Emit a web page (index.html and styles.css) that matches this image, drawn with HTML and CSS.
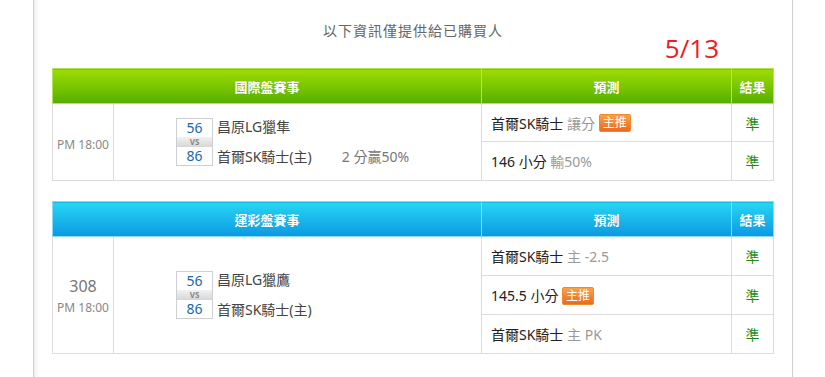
FILE: index.html
```html
<!DOCTYPE html>
<html lang="zh-Hant">
<head>
<meta charset="utf-8">
<title>賽事預測</title>
<link rel="stylesheet" href="styles.css">
</head>
<body>
<div class="page">
  <div class="notice">以下資訊僅提供給已購買人</div>
  <div class="date">5/13</div>

  <table class="board green">
    <colgroup><col class="c1"><col class="c2"><col class="c3"><col class="c4"></colgroup>
    <thead>
      <tr><th colspan="2">國際盤賽事</th><th>預測</th><th>結果</th></tr>
    </thead>
    <tbody>
      <tr class="short">
        <td rowspan="2" class="time"><div class="clock solo">PM 18:00</div></td>
        <td rowspan="2" class="match">
          <div class="matchup">
            <div class="score">
              <div class="num">56</div>
              <div class="vs">VS</div>
              <div class="num">86</div>
            </div>
            <div class="teams">
              <div class="team">昌原LG獵隼</div>
              <div class="team">首爾SK騎士(主)<span class="extra">2 分贏50%</span></div>
            </div>
          </div>
        </td>
        <td class="pick">首爾SK騎士 <span class="muted">讓分</span> <span class="badge">主推</span></td>
        <td class="result">準</td>
      </tr>
      <tr>
        <td class="pick">146 小分 <span class="muted">輸50%</span></td>
        <td class="result">準</td>
      </tr>
    </tbody>
  </table>

  <table class="board blue">
    <colgroup><col class="c1"><col class="c2"><col class="c3"><col class="c4"></colgroup>
    <thead>
      <tr><th colspan="2">運彩盤賽事</th><th>預測</th><th>結果</th></tr>
    </thead>
    <tbody>
      <tr>
        <td rowspan="3" class="time"><div class="code">308</div><div class="clock">PM 18:00</div></td>
        <td rowspan="3" class="match">
          <div class="matchup">
            <div class="score">
              <div class="num">56</div>
              <div class="vs">VS</div>
              <div class="num">86</div>
            </div>
            <div class="teams">
              <div class="team">昌原LG獵鷹</div>
              <div class="team">首爾SK騎士(主)</div>
            </div>
          </div>
        </td>
        <td class="pick">首爾SK騎士 <span class="muted">主 -2.5</span></td>
        <td class="result">準</td>
      </tr>
      <tr>
        <td class="pick">145.5 小分 <span class="badge">主推</span></td>
        <td class="result">準</td>
      </tr>
      <tr>
        <td class="pick">首爾SK騎士 <span class="muted">主 PK</span></td>
        <td class="result">準</td>
      </tr>
    </tbody>
  </table>
</div>
</body>
</html>
```

FILE: styles.css
```css
html, body {
  margin: 0;
  padding: 0;
  background: #fff;
}
body {
  font-family: "Noto Sans", "Noto Sans CJK TC", sans-serif;
  color: #333;
  overflow: hidden;
}
.page {
  margin-left: 33px;
  width: 722px;
  min-height: 400px;
  padding: 24px 18px 40px 18px;
  border-left: 1px solid #cfcfcf;
  border-right: 1px solid #cfcfcf;
  box-shadow: inset 5px 0 5px -3px rgba(0,0,0,0.08);
  background: #fff;
}
.notice {
  text-align: center;
  font-size: 14px;
  line-height: 14px;
  letter-spacing: 1px;
  color: #666;
}
.date {
  margin-top: -1px;
  text-align: right;
  padding-right: 55px;
  font-family: "Open Sans", "Noto Sans", sans-serif;
  font-weight: 400;
  font-size: 26px;
  line-height: 22px;
  color: #ec1c24;
}
.board {
  width: 722px;
  table-layout: fixed;
  border-collapse: collapse;
  margin-top: 9px;
}
.board + .board {
  margin-top: 20px;
}
.c1 { width: 61px; }
.c2 { width: 368px; }
.c3 { width: 250px; }
.c4 { width: 42px; }

.board th {
  height: 34px;
  padding: 0;
  color: #fff;
  font-size: 13px;
  font-weight: bold;
  text-align: center;
  text-shadow: 0 0 1px rgba(0,0,0,0.15);
}
.green th {
  background: linear-gradient(#9edd00, #56ae00);
  border: 1px solid #b2e35a;
}
.blue th {
  background: linear-gradient(#27d6f2, #0b99e3);
  border: 1px solid #84dcf6;
}
.board td {
  border: 1px solid #dcdcdc;
  padding: 0;
  height: 38px;
  font-size: 14px;
}
.board .short td {
  height: 37px;
}
.time {
  text-align: center;
  color: #888;
}
.clock {
  font-size: 12px;
  line-height: 14px;
}
.clock.solo {
  padding-top: 6px;
}
.code {
  font-size: 16px;
  line-height: 20px;
  color: #777;
  margin-bottom: 5px;
}
.match {
  padding-left: 62px !important;
}
.matchup {
  display: flex;
  align-items: stretch;
  gap: 4px;
}
.score {
  width: 35px;
  border: 1px solid #cfcfcf;
  display: flex;
  flex-direction: column;
}
.num {
  height: 18px;
  line-height: 18px;
  text-align: center;
  font-size: 14px;
  color: #1768ad;
}
.vs {
  height: 10px;
  line-height: 10px;
  text-align: center;
  font-size: 8px;
  font-weight: bold;
  color: #888;
  background: linear-gradient(#f2f2f2, #d6d6d6);
}
.teams {
  display: flex;
  flex-direction: column;
  justify-content: space-between;
  padding: 0;
}
.team {
  height: 18px;
  line-height: 18px;
  color: #444;
  white-space: nowrap;
}
.extra {
  margin-left: 30px;
  color: #777;
}
.pick {
  padding-left: 9px !important;
  color: #222;
  white-space: nowrap;
}
.muted {
  color: #999;
}
.badge {
  display: inline-block;
  vertical-align: middle;
  margin-top: -3px;
  height: 16px;
  line-height: 16px;
  padding: 0 3px;
  font-size: 12px;
  color: #fff;
  border: 1px solid #f28a2a;
  border-radius: 2px;
  background: linear-gradient(#f9a24a, #ea6a1e);
}
.result {
  text-align: center;
  color: #1a8c1a;
}
```
